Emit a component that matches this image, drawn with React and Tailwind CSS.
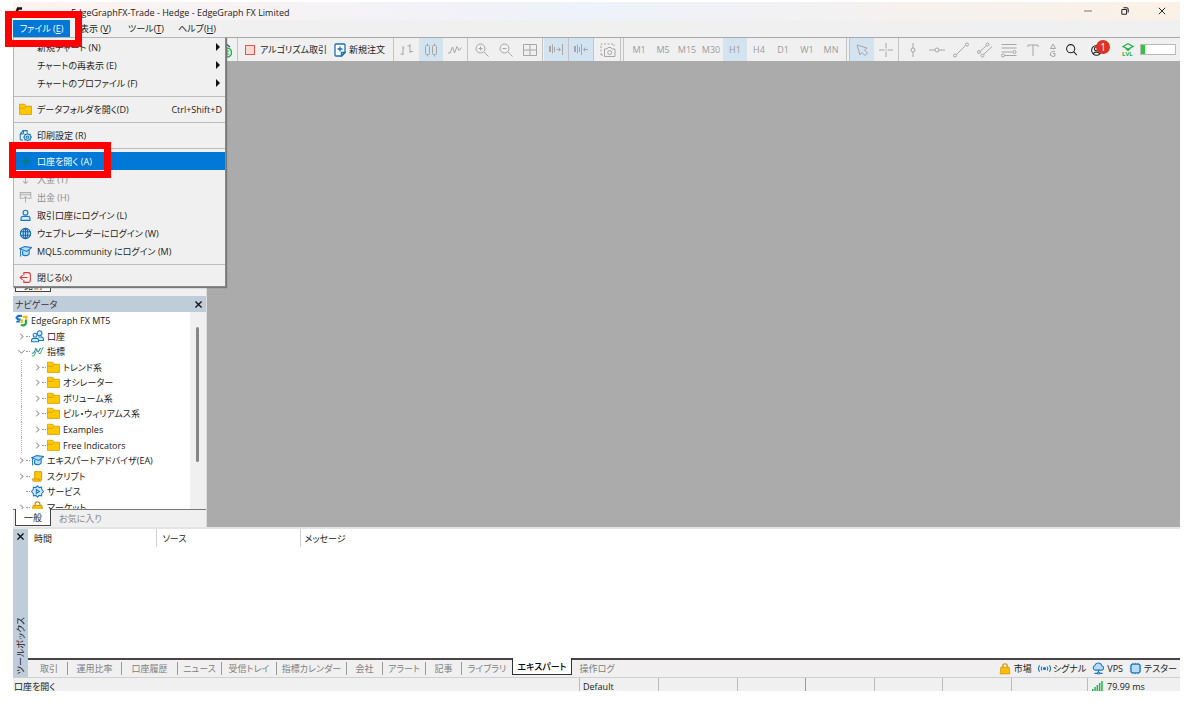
import { useState } from "react";
import clsx from "clsx";

const menuItems = [
  { label: "新規チャート (N)", sub: true },
  { label: "チャートの再表示 (E)", sub: true },
  { label: "チャートのプロファイル (F)", sub: true },
  null,
  { label: "データフォルダを開く(D)", icon: "folder", shortcut: "Ctrl+Shift+D" },
  null,
  { label: "印刷設定 (R)", icon: "print" },
  null,
  { label: "口座を開く (A)", icon: "plus", active: true },
  { label: "入金 (T)", icon: "deposit", disabled: true },
  { label: "出金 (H)", icon: "withdraw", disabled: true },
  { label: "取引口座にログイン (L)", icon: "user" },
  { label: "ウェブトレーダーにログイン (W)", icon: "globe" },
  { label: "MQL5.community にログイン (M)", icon: "cap" },
  null,
  { label: "閉じる(x)", icon: "exit" },
];

const treeItems = [
  { label: "口座", icon: "users", level: 0, arrow: "right" },
  { label: "指標", icon: "wave", level: 0, arrow: "down" },
  { label: "トレンド系", icon: "folder", level: 1, arrow: "right" },
  { label: "オシレーター", icon: "folder", level: 1, arrow: "right" },
  { label: "ボリューム系", icon: "folder", level: 1, arrow: "right" },
  { label: "ビル・ウィリアムス系", icon: "folder", level: 1, arrow: "right" },
  { label: "Examples", icon: "folder", level: 1, arrow: "right" },
  { label: "Free Indicators", icon: "folder", level: 1, arrow: "right" },
  { label: "エキスパートアドバイザ(EA)", icon: "cap", level: 0, arrow: "right" },
  { label: "スクリプト", icon: "script", level: 0, arrow: "right" },
  { label: "サービス", icon: "gear", level: 0 },
  { label: "マーケット", icon: "bag", level: 0, arrow: "right" },
];

const timeframes = ["M1", "M5", "M15", "M30", "H1", "H4", "D1", "W1", "MN"];

const toolboxTabs = [
  { label: "取引", width: "w-[37px]" },
  { label: "運用比率", width: "w-[54px]" },
  { label: "口座履歴", width: "w-[56px]" },
  { label: "ニュース", width: "w-[44px]" },
  { label: "受信トレイ", width: "w-[55px]" },
  { label: "指標カレンダー", width: "w-[70px]" },
  { label: "会社", width: "w-[36px]" },
  { label: "アラート", width: "w-[43px]" },
  { label: "記事", width: "w-[36px]" },
  { label: "ライブラリ", width: "w-[50px]" },
  { label: "エキスパート", width: "w-[60px]" },
  { label: "操作ログ", width: "w-[50px]" },
];

const paths = {
  folder: (
    <g fill="#ffc800" stroke="#d79b00">
      <path d="M.5 1.500h6.500l1.500 2.500h7v10h-15z" />
      <path d="M.5 6.500h6L8.500 4" fill="none" />
    </g>
  ),
  print: (
    <g fill="none" stroke="#1a78c2" strokeWidth="1.300">
      <path d="M5 13.500H2.500a1 1 0 0 1-1-1V6L5 2h5v2.500M1.500 6H4.500a1 1 0 0 0 1-1V2" />
      <path d="M10.500 5.500l1.300 1.300 1.900-.2.200 1.900 1.300 1.500-1.300 1.500-.2 1.900-1.900-.2-1.300 1.300-1.300-1.300-1.900.2-.2-1.900L5.800 10l1.300-1.500.2-1.900 1.900.2z" fill="#d5ebfa" />
      <circle cx="10.500" cy="10" r="1.500" />
    </g>
  ),
  plus: <path d="M8 3v10M3 8h10" stroke="#0d7d5c" strokeWidth="1.800" />,
  deposit: (
    <path d="M2 6V2h12v4M8 4v9M5 10l3 3 3-3" fill="none" stroke="#b0b0b0" strokeWidth="1.300" />
  ),
  withdraw: (
    <path d="M5 9H1.500V2h13v7H11M1.500 4.500h13M8 14V7M5.500 9.500L8 7l2.500 2.500" fill="none" stroke="#b0b0b0" strokeWidth="1.300" />
  ),
  user: (
    <g fill="#d5ebfa" stroke="#1a78c2" strokeWidth="1.400">
      <circle cx="8" cy="4.500" r="3" />
      <path d="M2.500 14v-2.500a2.500 2.500 0 0 1 2.500-2.500h6a2.500 2.500 0 0 1 2.500 2.500V14z" />
    </g>
  ),
  users: (
    <g fill="#d5ebfa" stroke="#1a78c2" strokeWidth="1.300">
      <circle cx="10.500" cy="4" r="3" />
      <path d="M8 13h7.300v-2A3 3 0 0 0 12 8.500H9" />
      <circle cx="5" cy="6.500" r="2.400" />
      <path d="M.7 14.500v-2a2.500 2.500 0 0 1 2.500-2.200h3.600a2.500 2.500 0 0 1 2.500 2.200v2z" />
    </g>
  ),
  globe: (
    <g fill="none" stroke="#1268ae" strokeWidth="1.300">
      <circle cx="8" cy="8" r="6.300" fill="#b9dcf5" />
      <ellipse cx="8" cy="8" rx="2.800" ry="6.300" />
      <path d="M2 5.800h12M2 10.200h12M8 1.700v12.600" />
    </g>
  ),
  cap: (
    <g fill="#b9dcf5" stroke="#1a78c2" strokeWidth="1.300">
      <path d="M4.500 7v5c2 1.800 6 1.300 8-.8V6" />
      <path d="M.8 4.500L7 2l8.500 1.200L9.500 8z" />
      <path d="M2 5v9" />
    </g>
  ),
  exit: (
    <path d="M6 5V2h5.500a2.500 2.500 0 0 1 2.500 2.500v7a2.500 2.500 0 0 1-2.500 2.500H6v-3M10.500 8H1.500M4.500 5L1.500 8l3 3" fill="none" stroke="#d93b3b" strokeWidth="1.300" />
  ),
  wave: (
    <g fill="none" strokeWidth="1.200">
      <path d="M1 10h2.500L6 4l3 5 2-4.500h1.500" stroke="#1a78c2" />
      <path d="M1 13.500h2.500L7 6.500M9.500 10.500h2L15 2.500" stroke="#35b04a" />
    </g>
  ),
  script: (
    <g fill="#ffc800" stroke="#d08f00">
      <path d="M4.500 2h8.500v10.500h-8.500z" />
      <path d="M1.500 11h8.500c0 2 1 2.800 2 2.800H3.500c-1.300 0-2-1.300-2-2.800z" />
    </g>
  ),
  gear: (
    <g fill="#d5ebfa" stroke="#1a78c2" strokeWidth="1.300">
      <path d="M8 1l2 2.200 3-.6.300 3L15.500 8l-2.200 2.400-.3 3-3-.6L8 15l-2-2.200-3 .6-.3-3L.5 8l2.200-2.400.3-3 3 .6z" />
      <path d="M6.500 5.500v5l4-2.500z" />
    </g>
  ),
  bag: (
    <g stroke="#d08f00">
      <path d="M5 6V4a3 3 0 0 1 6 0v2" fill="none" strokeWidth="1.500" />
      <path d="M2.500 5.500h11l1 9h-13z" fill="#ffbf00" />
    </g>
  ),
  logo: (
    <g fill="none" strokeWidth="2.800">
      <path d="M8.500 2.200H4L2 4.500l2 2.500h3" stroke="#1a78c2" />
      <path d="M1.500 9.500h4.500" stroke="#1a78c2" strokeWidth="2" />
      <path d="M9.500 3.500h4.500V7" stroke="#f5bd13" />
      <path d="M8.500 6.500v4.500" stroke="#f5bd13" />
      <path d="M13.500 7v3.500a3.500 3.500 0 0 1-6 2.500" stroke="#29a745" />
    </g>
  ),
  signal: (
    <g fill="none" stroke="#1a78c2" strokeWidth="1.300">
      <circle cx="8" cy="8" r="1.300" fill="#1a78c2" />
      <path d="M5 5.500a4 4 0 0 0 0 5M11 5.500a4 4 0 0 1 0 5M2 4a7 7 0 0 0 0 8M14 4a7 7 0 0 1 0 8" />
    </g>
  ),
  cloud: (
    <g fill="#b9dcf5" stroke="#1a78c2" strokeWidth="1.300">
      <path d="M4 10a3 3 0 0 1-.5-5.800A4.500 4.500 0 0 1 12 4.500 2.900 2.900 0 0 1 12.500 10z" />
      <path d="M8 10v3M3 14h3.500M9.500 14H13" />
      <circle cx="8" cy="13.500" r="1.300" />
    </g>
  ),
  chip: (
    <g fill="#b9dcf5" stroke="#1a78c2" strokeWidth="1.500">
      <path d="M5 1v14M8 1v14M11 1v14M1 5h14M1 8h14M1 11h14" strokeWidth="1" />
      <rect x="2.500" y="2.500" width="11" height="11" rx="2" />
    </g>
  ),
  bars: <path d="M4 4v9M1.500 12H4M4 6h1.500M11 2v9M8.500 4H11M11 9.500h3" />,
  candles: (
    <g>
      <rect x="2.500" y="3.500" width="4" height="9" rx="1" />
      <rect x="9.500" y="3.500" width="4" height="9" rx="1" />
      <path d="M4.500 1.500v2M4.500 12.500v2M11.500 1.500v2M11.500 12.500v2" />
    </g>
  ),
  line: <path d="M1 11h2L5.500 5l2 6L10 4.500l2 4 2.500-3" />,
  zoomIn: <path d="M11 6.500a4.500 4.500 0 1 1-9 0 4.500 4.500 0 0 1 9 0zM10 10l4.500 4.500M4.500 6.500h4M6.500 4.500v4" />,
  zoomOut: <path d="M11 6.500a4.500 4.500 0 1 1-9 0 4.500 4.500 0 0 1 9 0zM10 10l4.500 4.500M4.500 6.500h4" />,
  grid: <path d="M1.500 2.500h13v11h-13zM8 2.500v11M1.500 8h13" />,
  shift: <path d="M1.500 4v6M2.500 4v6M4.500 2.500v9M6.500 5v5M8.500 7.500h4M10.500 5.500l2 2-2 2M14.500 2v11" />,
  autoscroll: <path d="M1.500 4v6M2.500 4v6M4.500 2.500v9M6.500 5v5M8.500 2v11M10.500 7.500h4.500M12.500 5.500l-2 2 2 2" />,
  camera: (
    <g>
      <path d="M1 13V2h13v2M1 13h2" strokeDasharray="2 1.500" />
      <path d="M4.500 7h2.500l1-1.500h3L12 7h3v7.500H4.500z" />
      <circle cx="9.700" cy="10.500" r="2" />
    </g>
  ),
  cursor: <path d="M3 3l3 10 2-2.500 3 3 2.500-2.500-3-3L13 6z" />,
  cross: <path d="M8 1v5.500M8 9.500V15M1 8h5.500M9.500 8H15M7.500 8h1" />,
  vline: <path d="M8 1v5M8 10v5M10 8a2 2 0 1 1-4 0 2 2 0 0 1 4 0z" />,
  hline: <path d="M0 8h6M10 8h6M10 8a2 2 0 1 1-4 0 2 2 0 0 1 4 0z" />,
  trend: <path d="M3.500 12.500l9-9M3.500 13.500a1.500 1.500 0 1 1-3 0 1.500 1.500 0 0 1 3 0zM15.500 2.500a1.500 1.500 0 1 1-3 0 1.500 1.500 0 0 1 3 0z" />,
  channel: <path d="M3.500 9l6-5.500M6.500 12.500l8.500-8M3.500 10a1.500 1.500 0 1 1-3 0 1.500 1.500 0 0 1 3 0zM12 2.500a1.500 1.500 0 1 1-3 0 1.500 1.500 0 0 1 3 0zM7 13.500a1.500 1.500 0 1 1-3 0 1.500 1.500 0 0 1 3 0z" />,
  fibo: <path d="M.5 2.500h15M.5 6h15M.5 10h11M3.500 13.500h12M15 10a1.500 1.500 0 1 1-3 0 1.500 1.500 0 0 1 3 0zM3.500 13.500a1.500 1.500 0 1 1-3 0 1.500 1.500 0 0 1 3 0z" />,
  text: <path d="M3 5V3h10v2M8 3v11" />,
  shapes: <path d="M8 2l2.500 4.500h-5zM10 10L8 9l-2.500 2v2.500l2.500 1 2-.5v-2.500H8" />,
};

function Icon({ name, className }) {
  return (
    <svg
      viewBox="0 0 16 16"
      fill="none"
      stroke="#a6a6a6"
      strokeWidth="1"
      aria-hidden="true"
      className={clsx("shrink-0", className || "size-[13px]")}
    >
      {paths[name]}
    </svg>
  );
}

function Divider() {
  return <span className="h-full w-px shrink-0 bg-[#c4c4c4]" />;
}

function ToolButton({ name, active }) {
  return (
    <button
      type="button"
      aria-label={name}
      className={clsx(
        "flex h-full w-6 shrink-0 items-center justify-center",
        active && "bg-[#d4e3f0]"
      )}
    >
      <Icon name={name} className="size-4" />
    </button>
  );
}

// "表示 (V)" style captions get their access key underlined
function MenuLabel({ text, hotkey }) {
  return (
    <>
      {text}(<u>{hotkey}</u>)
    </>
  );
}

function TitleBar() {
  return (
    <header className="flex h-[18px] shrink-0 items-center bg-linear-to-r from-[#fdf3f0] via-[#eef2fa] to-[#fbf1e6]">
      <svg viewBox="0 0 16 12" className="ml-0.5 h-3 w-4 shrink-0" aria-hidden="true">
        <path d="M7 3.500H3L1.500 7v4" fill="none" stroke="#111" strokeWidth="2.500" />
      </svg>
      <h1 className="ml-10 whitespace-nowrap pt-0.5 text-[#222]">
        EdgeGraphFX-Trade - Hedge - EdgeGraph FX Limited
      </h1>
      <div className="ml-auto flex h-full">
        <button type="button" aria-label="最小化" className="flex w-[37px] items-center justify-center">
          <svg viewBox="0 0 10 10" className="size-2" stroke="#555">
            <path d="M0 5h10" />
          </svg>
        </button>
        <button type="button" aria-label="元に戻す" className="flex w-[37px] items-center justify-center">
          <svg viewBox="0 0 10 10" className="size-2" fill="none" stroke="#222" strokeWidth="1.300">
            <rect x="1" y="3" width="6" height="6" rx="1" />
            <path d="M3 1h4a2 2 0 0 1 2 2v4" />
          </svg>
        </button>
        <button type="button" aria-label="閉じる" className="flex w-[37px] items-center justify-center">
          <svg viewBox="0 0 10 10" className="size-2" stroke="#222" strokeWidth="1.200">
            <path d="M1 1l8 8M9 1l-8 8" />
          </svg>
        </button>
      </div>
    </header>
  );
}

function FileMenu() {
  return (
    <div
      role="menu"
      className="absolute left-0 top-full z-20 w-[213px] border border-[#b5b5b5] border-r-[#888] border-b-[#888] bg-[#f0f0f0] shadow-[1px_1px_1px_#777]"
    >
      {menuItems.map((item, index) =>
        item ? (
          <button
            key={index}
            type="button"
            role="menuitem"
            disabled={item.disabled}
            className={clsx(
              "flex h-[18px] w-full items-center whitespace-nowrap pl-[5px] pr-[3px] text-left",
              item.active ? "bg-[#0078d7] text-white" : "text-[#1c1c1c]",
              item.disabled && "text-[#8c8c8c]"
            )}
          >
            <span className="flex w-[18px] shrink-0">
              {item.icon && <Icon name={item.icon} />}
            </span>
            <span>{item.label}</span>
            {item.shortcut && <span className="ml-auto">{item.shortcut}</span>}
            {item.sub && (
              <svg viewBox="0 0 4 8" className="ml-auto mr-0.5 h-2 w-1" aria-hidden="true">
                <path d="M0 0l4 4-4 4z" fill="#111" />
              </svg>
            )}
          </button>
        ) : (
          <div key={index} role="separator" className="flex h-2 items-center">
            <span className="h-px w-full bg-[#bdbdbd]" />
          </div>
        )
      )}
      <span className="pointer-events-none absolute -left-[5px] top-[104px] h-[36px] w-[102px] border-[7px] border-[#fe0000]" />
    </div>
  );
}

function MenuBar() {
  return (
    <nav className="relative z-20 flex h-[17px] shrink-0 items-center bg-[#f0f0f0]">
      <button type="button" className="h-full w-[57px] bg-[#0078d7] text-white">
        <MenuLabel text="ファイル " hotkey="E" />
      </button>
      <button type="button" className="h-full w-[51px] whitespace-nowrap">
        <MenuLabel text="表示 " hotkey="V" />
      </button>
      <button type="button" className="h-full w-[50px] whitespace-nowrap">
        <MenuLabel text="ツール" hotkey="T" />
      </button>
      <button type="button" className="h-full w-[52px] whitespace-nowrap">
        <MenuLabel text="ヘルプ" hotkey="H" />
      </button>
      <FileMenu />
      <span className="pointer-events-none absolute -left-2 -top-[9px] z-30 h-9 w-[77px] border-[7px] border-[#fe0000]" />
    </nav>
  );
}

function Toolbar() {
  const [timeframe, setTimeframe] = useState("H1");

  return (
    <div className="flex h-6 shrink-0 items-center border-t border-[#a8a8a8] bg-[#f0f0f0]">
      <div className="flex h-full w-[219px] shrink-0 items-center justify-end">
        <svg viewBox="0 0 16 16" className="size-4" fill="none" stroke="#27b34a" strokeWidth="1.500" aria-hidden="true">
          <circle cx="11" cy="10.500" r="4.500" fill="#e3f7e7" />
          <path d="M11 6v9M9 9h4M9 12h4" strokeWidth="1" />
          <path d="M10 2l4 3" stroke="#1a5ea8" />
        </svg>
      </div>
      <span className="w-[5px] shrink-0" />
      <Divider />
      <button type="button" className="flex w-[90px] shrink-0 items-center gap-[5px] whitespace-nowrap pl-[7px]">
        <span className="size-[10px] shrink-0 border border-[#e0564a] bg-[#fbdad6]" />
        アルゴリズム取引
      </button>
      <button type="button" className="flex w-[65px] shrink-0 items-center gap-[3px] whitespace-nowrap pl-[6px]">
        <svg viewBox="0 0 12 14" className="h-[14px] w-3 shrink-0" fill="none" stroke="#1a6fb5" strokeWidth="1.300" aria-hidden="true">
          <path d="M1 2a1 1 0 0 1 1-1h8a1 1 0 0 1 1 1v7.500L7.500 13H2a1 1 0 0 1-1-1z" fill="#fff" />
          <path d="M7.500 13V9.500H11zM6 3.500v5M3.500 6h5" />
        </svg>
        新規注文
      </button>
      <Divider />
      <span className="w-px shrink-0" />
      <ToolButton name="bars" />
      <ToolButton name="candles" active />
      <ToolButton name="line" />
      <Divider />
      <span className="w-0.5 shrink-0" />
      <ToolButton name="zoomIn" />
      <ToolButton name="zoomOut" />
      <ToolButton name="grid" />
      <Divider />
      <span className="w-px shrink-0" />
      <ToolButton name="shift" active />
      <Divider />
      <ToolButton name="autoscroll" active />
      <Divider />
      <span className="w-0.5 shrink-0" />
      <ToolButton name="camera" />
      <Divider />
      <span className="w-0.5 shrink-0" />
      <Divider />
      <span className="w-[3px] shrink-0" />
      {timeframes.map((tf) => (
        <button
          key={tf}
          type="button"
          onClick={() => setTimeframe(tf)}
          className={clsx(
            "h-full w-6 shrink-0 text-center text-[#9c9c9c]",
            tf === timeframe && "bg-[#d4e3f0]"
          )}
        >
          {tf}
        </button>
      ))}
      <span className="w-[3px] shrink-0" />
      <Divider />
      <span className="w-0.5 shrink-0" />
      <Divider />
      <ToolButton name="cursor" active />
      <ToolButton name="cross" />
      <Divider />
      <span className="w-0.5 shrink-0" />
      <ToolButton name="vline" />
      <ToolButton name="hline" />
      <ToolButton name="trend" />
      <ToolButton name="channel" />
      <ToolButton name="fibo" />
      <ToolButton name="text" />
      <div className="flex w-4 shrink-0 justify-center">
        <Icon name="shapes" className="size-4" />
      </div>
      <div className="ml-auto flex h-full shrink-0 items-center pr-1">
        <button type="button" aria-label="検索" className="w-[25px]">
          <svg viewBox="0 0 16 16" className="size-[13px]" fill="none" stroke="#222" strokeWidth="1.300">
            <circle cx="7" cy="7" r="5" />
            <path d="M10.500 10.500L14.500 15" />
          </svg>
        </button>
        <button type="button" aria-label="通知" className="relative h-4 w-8">
          <svg viewBox="0 0 16 16" className="size-[13px]" fill="none" stroke="#222" strokeWidth="1.300">
            <circle cx="8" cy="9" r="6" />
            <circle cx="8" cy="7" r="2.500" />
            <path d="M4 13.500c1-3 7-3 8 0" />
          </svg>
          <span className="absolute -top-0.5 left-[6px] size-[14px] rounded-full bg-[#dd3322] text-center text-[10px] leading-[14px] text-white">
            1
          </span>
        </button>
        <div className="flex w-[18px] flex-col items-start text-[#27b34a]">
          <svg viewBox="0 0 12 8" className="h-2 w-3" fill="none" stroke="#27b34a" strokeWidth="1.200" aria-hidden="true">
            <path d="M1 3.500L6 .8l5 2.700-5 2.500zM3.500 5l2.500 2.500L8.500 5" />
          </svg>
          <span className="text-[6px] font-bold leading-[6px]">LVL</span>
        </div>
        <div className="flex h-[11px] w-9 border border-[#b9b9b9] bg-white">
          <span className="h-full w-1 bg-[#2fc63f]" />
        </div>
      </div>
    </div>
  );
}

function TreeArrow({ direction }) {
  return (
    <svg viewBox="0 0 8 8" className="size-[7px] shrink-0" fill="none" stroke="#666" strokeWidth="1" aria-hidden="true">
      {direction === "right" && <path d="M2.500 1l3.500 3-3.500 3" />}
      {direction === "down" && <path d="M.5 2.500L4 6l3.500-3.500" />}
    </svg>
  );
}

function Navigator() {
  return (
    <section aria-label="ナビゲータ" className="flex min-h-0 flex-1 flex-col">
      <div className="flex h-4 shrink-0 items-center justify-between bg-[#bfcddb] pl-0.5 pr-1 text-[#333]">
        <h2>ナビゲータ</h2>
        <button type="button" aria-label="閉じる">
          <svg viewBox="0 0 8 8" className="size-[7px]" stroke="#111" strokeWidth="1.500">
            <path d="M.5.5l7 7M7.500.5l-7 7" />
          </svg>
        </button>
      </div>
      <div className="flex min-h-0 flex-1">
        <div className="flex-1 overflow-hidden bg-white pt-px">
          <ul className="grid h-[202px] auto-rows-fr whitespace-nowrap text-[#222]">
            <li className="flex items-center gap-[3px] pl-0.5">
              <Icon name="logo" />
              EdgeGraph FX MT5
            </li>
            {treeItems.map((item) => (
              <li
                key={item.label}
                className={clsx(
                  "flex items-center",
                  item.level === 1 ? "ml-2 border-l border-dotted border-[#b0b0b0] pl-3" : "pl-[5px]"
                )}
              >
                <TreeArrow direction={item.arrow} />
                <span className="mx-px w-1 border-t border-dotted border-[#999]" />
                <Icon name={item.icon} />
                <span className="pl-[3px]">{item.label}</span>
              </li>
            ))}
          </ul>
        </div>
        <div className="w-4 shrink-0 bg-[#f0f0f0] pl-[6px] pt-[15px]">
          <div className="h-[135px] w-[3px] rounded bg-[#868686]" />
        </div>
      </div>
      <div className="flex h-[18px] shrink-0 border-t border-[#777] pl-0.5">
        <button type="button" className="-mt-px h-[17px] w-9 border border-t-0 border-[#444] bg-white">
          一般
        </button>
        <button type="button" className="h-4 px-2 text-[#888]">
          お気に入り
        </button>
      </div>
    </section>
  );
}

function Toolbox() {
  const [tab, setTab] = useState("エキスパート");

  return (
    <section aria-label="ツールボックス" className="flex h-[148px] shrink-0">
      <div className="flex w-[15px] shrink-0 flex-col items-center justify-between bg-[#bfcddb] pb-[3px] pt-1">
        <button type="button" aria-label="閉じる">
          <svg viewBox="0 0 8 8" className="block size-[7px]" stroke="#111" strokeWidth="1.500">
            <path d="M.5.5l7 7M7.500.5l-7 7" />
          </svg>
        </button>
        <h2 className="rotate-180 leading-3 [text-orientation:sideways] [writing-mode:vertical-rl]">
          ツールボックス
        </h2>
      </div>
      <div className="flex min-w-0 flex-1 flex-col">
        <div className="flex-1 bg-white">
          <table className="w-full table-fixed text-left">
            <thead>
              <tr className="h-[18px]">
                <th className="w-[128px] border-r border-[#d0d0d0] pl-1.5 font-normal">時間</th>
                <th className="w-[144px] border-r border-[#d0d0d0] pl-1.5 font-normal">ソース</th>
                <th className="pl-1 font-normal">メッセージ</th>
              </tr>
            </thead>
            <tbody />
          </table>
        </div>
        <div className="flex h-[19px] shrink-0 items-start border-t-2 border-[#4a444a] bg-[#f0f0f0]">
          <div role="tablist" className="flex pl-[3px]">
            {toolboxTabs.map((item, index) => {
              const selected = item.label === tab;
              const last = index >= toolboxTabs.length - 3;
              return (
                <button
                  key={item.label}
                  type="button"
                  role="tab"
                  aria-selected={selected}
                  onClick={() => setTab(item.label)}
                  className={clsx(
                    "flex h-4 shrink-0 items-center justify-center whitespace-nowrap",
                    item.width,
                    selected
                      ? "-mt-0.5 h-[17px] border border-t-0 border-[#333] bg-white font-medium text-black"
                      : "text-[#808080]"
                  )}
                >
                  <span className="flex-1">{item.label}</span>
                  {!selected && !last && <span className="h-[13px] w-px bg-[#999]" />}
                </button>
              );
            })}
          </div>
          <div className="ml-auto flex h-[17px] items-center gap-1.5 whitespace-nowrap pr-[3px]">
            <a href="#market" className="flex items-center gap-[3px]">
              <Icon name="bag" className="size-3" />
              市場
            </a>
            <a href="#signals" className="flex items-center gap-0.5">
              <Icon name="signal" />
              シグナル
            </a>
            <a href="#vps" className="flex items-center gap-0.5">
              <Icon name="cloud" />
              VPS
            </a>
            <a href="#tester" className="flex items-center gap-0.5">
              <Icon name="chip" />
              テスター
            </a>
          </div>
        </div>
      </div>
    </section>
  );
}

function StatusBar() {
  return (
    <footer className="flex h-[14px] shrink-0 overflow-hidden whitespace-nowrap border-t border-[#d0d0d0] bg-[#f0f0f0] leading-[17px] text-[#222]">
      <span className="flex-1 pl-px">口座を開く</span>
      <span className="w-[79px] border-l border-[#bbb] pl-[3px]">Default</span>
      <span className="w-[79px] border-l border-[#bbb]" />
      <span className="w-[68px] border-l border-[#bbb]" />
      <span className="w-[69px] border-l border-[#999]" />
      <span className="w-[68px] border-l border-[#bbb]" />
      <span className="w-[69px] border-l border-[#bbb]" />
      <span className="w-[76px] border-l border-[#bbb]" />
      <span className="flex w-[93px] gap-1 border-l border-[#bbb] pl-1">
        <svg viewBox="0 0 11 10" className="mt-[3px] h-[10px] w-[11px]" fill="#27b34a" aria-hidden="true">
          <path d="M0 8h1.500v2H0zM2.300 6h1.500v4H2.300zM4.600 4h1.500v6H4.600zM6.900 2h1.500v8H6.900zM9.200 0h1.500v10H9.200z" />
        </svg>
        79.99 ms
      </span>
    </footer>
  );
}

export default function App() {
  return (
    <main className="flex h-screen flex-col bg-white pb-3 pl-[13px] pr-5 pt-0.5 font-['Open_Sans','Noto_Sans_CJK_JP',sans-serif] text-[9px] leading-none text-[#222] [font-feature-settings:'palt']">
      <TitleBar />
      <MenuBar />
      <Toolbar />
      <div className="flex min-h-0 flex-1 bg-[#f0f0f0]">
        <aside className="flex w-[194px] shrink-0 flex-col border-r border-[#ddd]">
          <section aria-label="気配値表示" className="flex h-[235px] shrink-0 flex-col">
            <div className="flex-1 bg-white" />
            <div className="flex h-4 shrink-0 pl-0.5">
              <button type="button" className="mb-1 w-9 border border-t-0 border-[#444] bg-white">
                銘柄
              </button>
            </div>
          </section>
          <Navigator />
        </aside>
        <div className="flex-1 bg-[#ababab]" />
      </div>
      <div className="h-0.5 shrink-0 bg-[#e4e4e4]" />
      <Toolbox />
      <StatusBar />
    </main>
  );
}
